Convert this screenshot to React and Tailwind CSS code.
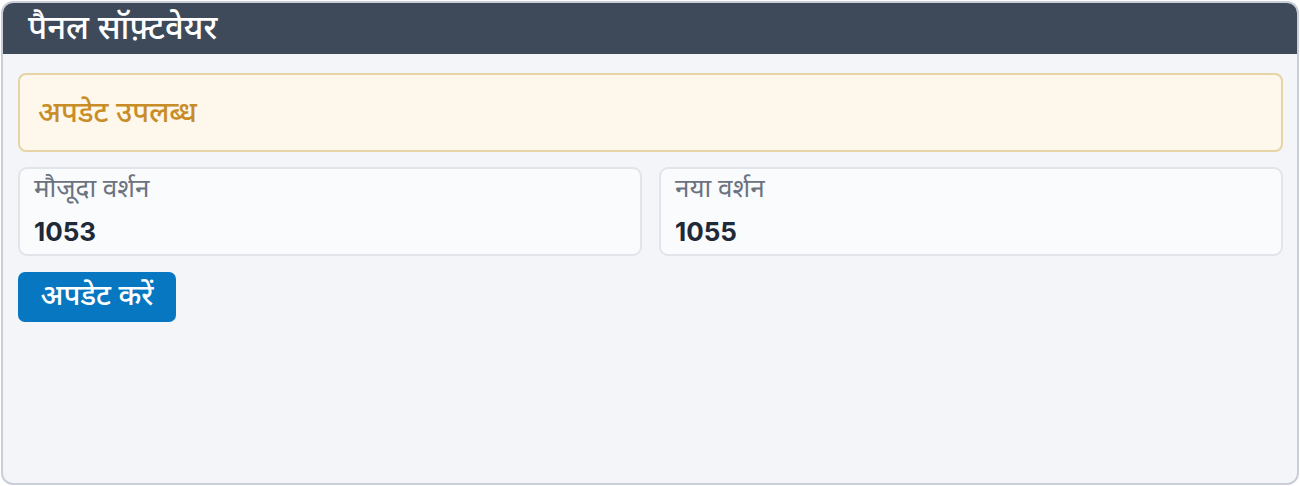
import React from 'react';

export default function App() {
  const font = { fontFamily: '"Noto Sans", "Noto Sans Devanagari", sans-serif' };
  return (
    <div className="w-[1300px] h-[486px] bg-white p-px" style={font}>
      <div className="h-full flex flex-col rounded-[12px] border-2 border-[#c9ced8] overflow-hidden bg-[#f3f5f8]">
        <div className="h-[51px] bg-[#3e4a59] flex items-center px-[25px] shrink-0">
          <h1 className="text-[33px] font-medium text-white leading-none pb-[5px]">पैनल सॉफ़्टवेयर</h1>
        </div>
        <div className="flex flex-col pl-[15px] pr-[14px] pt-[19px]">
          <div className="h-[79px] flex items-center px-[18px] rounded-[8px] border-2 border-[#e6d3a6] bg-[#fef7eb]">
            <span className="text-[29px] font-medium text-[#c88d26] leading-none pb-[5px]">अपडेट उपलब्ध</span>
          </div>
          <div className="grid grid-cols-2 gap-[17px] mt-[15px]">
            <VersionCard label="मौजूदा वर्शन" value="1053" />
            <VersionCard label="नया वर्शन" value="1055" />
          </div>
          <div className="mt-4">
            <button className="h-[50px] w-[158px] rounded-[7px] bg-[#0677c0] text-white text-[29px] font-medium leading-none pb-[7px]">
              अपडेट करें
            </button>
          </div>
        </div>
      </div>
    </div>
  );
}

function VersionCard({ label, value }) {
  return (
    <div className="h-[89px] rounded-[9px] border-2 border-[#e1e5ea] bg-[#f9fbfd] px-[14px] pt-[1px]">
      <div className="text-[26px] text-[#6b7280] leading-[34px]">{label}</div>
      <div
        className="text-[26px] font-bold text-[#1f2937] leading-[36px] mt-[10px]"
        style={{ fontFamily: 'Inter, "Noto Sans", sans-serif' }}
      >
        {value}
      </div>
    </div>
  );
}
